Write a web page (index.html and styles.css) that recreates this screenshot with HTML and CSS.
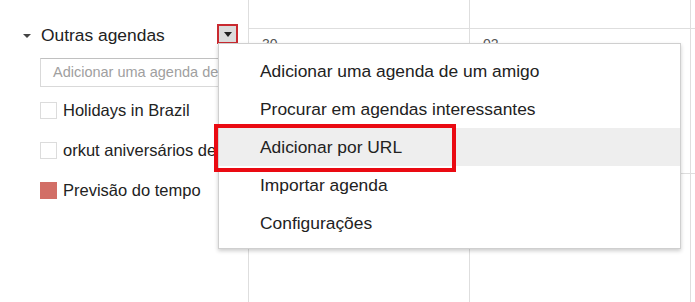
FILE: index.html
```html
<!DOCTYPE html>
<html lang="pt-BR">
<head>
<meta charset="utf-8">
<title>Outras agendas</title>
<link rel="stylesheet" href="styles.css">
</head>
<body>
<div class="page">
  <aside class="sidebar">
    <div class="section-head">
      <span class="caret"></span>
      <span class="section-title">Outras agendas</span>
      <span class="drop-btn"><span class="drop-tri"></span></span>
    </div>
    <div class="add-input">Adicionar uma agenda de um amigo</div>
    <ul class="cal-list">
      <li class="cal-item"><span class="chk"></span><span class="cal-name">Holidays in Brazil</span></li>
      <li class="cal-item"><span class="chk"></span><span class="cal-name">orkut aniversários de contatos</span></li>
      <li class="cal-item"><span class="chk chk-on"></span><span class="cal-name">Previsão do tempo</span></li>
    </ul>
  </aside>
  <section class="calendar">
    <div class="cell head"></div>
    <div class="cell head"></div>
    <div class="cell head"></div>
    <div class="cell head"></div>
    <div class="cell week"><span class="day">30</span></div>
    <div class="cell week"><span class="day">02</span></div>
    <div class="cell week"></div>
    <div class="cell week"></div>
    <div class="cell"></div>
    <div class="cell"></div>
    <div class="cell"></div>
    <div class="cell"></div>
  </section>
</div>
<div class="menu">
  <div class="menu-item">Adicionar uma agenda de um amigo</div>
  <div class="menu-item">Procurar em agendas interessantes</div>
  <div class="menu-item menu-item-hover">Adicionar por URL</div>
  <div class="menu-item">Importar agenda</div>
  <div class="menu-item">Configurações</div>
</div>
<div class="highlight-box"></div>
</body>
</html>
```
FILE: styles.css
```css
html, body {
  margin: 0;
  padding: 0;
  background: #fff;
}
body {
  width: 695px;
  height: 302px;
  overflow: hidden;
  position: relative;
  font-family: Arial, "Liberation Sans", sans-serif;
  color: #222;
}
.page {
  display: flex;
  height: 302px;
}
.sidebar {
  width: 248px;
  flex: none;
  box-sizing: border-box;
  padding: 24px 10px 0 40px;
}
.section-head {
  display: flex;
  align-items: center;
  height: 20px;
  margin-left: -17px;
}
.caret {
  width: 0;
  height: 0;
  border-left: 4px solid transparent;
  border-right: 4px solid transparent;
  border-top: 4px solid #444;
  margin-top: 3px;
}
.section-title {
  margin-left: 10px;
  font-size: 17.4px;
  flex: 1;
  margin-top: 2px;
}
.drop-btn {
  width: 21px;
  height: 20px;
  box-sizing: border-box;
  border: 2px solid #c92a30;
  background: #dcdcdc;
  display: flex;
  align-items: center;
  justify-content: center;
}
.drop-tri {
  width: 0;
  height: 0;
  border-left: 4px solid transparent;
  border-right: 4px solid transparent;
  border-top: 5px solid #222;
  margin-top: 1px;
}
.add-input {
  margin-top: 14px;
  height: 29px;
  box-sizing: border-box;
  border: 1px solid #d9d9d9;
  border-top-color: #c0c0c0;
  padding-left: 12px;
  line-height: 27px;
  font-size: 14.5px;
  color: #a0a0a0;
  white-space: nowrap;
  overflow: hidden;
}
.cal-list {
  list-style: none;
  margin: 3px 0 0;
  padding: 0;
}
.cal-item {
  display: flex;
  align-items: center;
  height: 40px;
  white-space: nowrap;
}
.chk {
  width: 17px;
  height: 17px;
  box-sizing: border-box;
  border: 1px solid #dcdcdc;
  flex: none;
}
.chk-on {
  background: #d26e66;
  border-color: #d26e66;
}
.cal-name {
  margin-left: 6px;
  font-size: 16.5px;
}
.calendar {
  flex: 1;
  display: grid;
  grid-template-columns: 221px 221px 221px 221px;
  grid-template-rows: 29px 145px 200px;
  overflow: hidden;
}
.cell {
  border-left: 1px solid #dedede;
  box-sizing: border-box;
}
.head, .week {
  border-bottom: 1px solid #dedede;
}
.day {
  display: block;
  padding: 7px 0 0 13px;
  font-size: 14px;
  color: #555;
}
.menu {
  position: absolute;
  left: 218px;
  top: 43px;
  width: 463px;
  box-sizing: border-box;
  background: #fff;
  border: 1px solid #cfcfcf;
  box-shadow: 0 2px 4px rgba(0, 0, 0, 0.2);
  padding: 8px 0 6px;
}
.menu-item {
  height: 38px;
  line-height: 38px;
  padding-left: 41px;
  font-size: 17.4px;
  color: #222;
  white-space: nowrap;
}
.menu-item-hover {
  background: #eeeeee;
}
.highlight-box {
  position: absolute;
  left: 214px;
  top: 124px;
  width: 242px;
  height: 48px;
  box-sizing: border-box;
  border: 4px solid #ea0a12;
}
```
